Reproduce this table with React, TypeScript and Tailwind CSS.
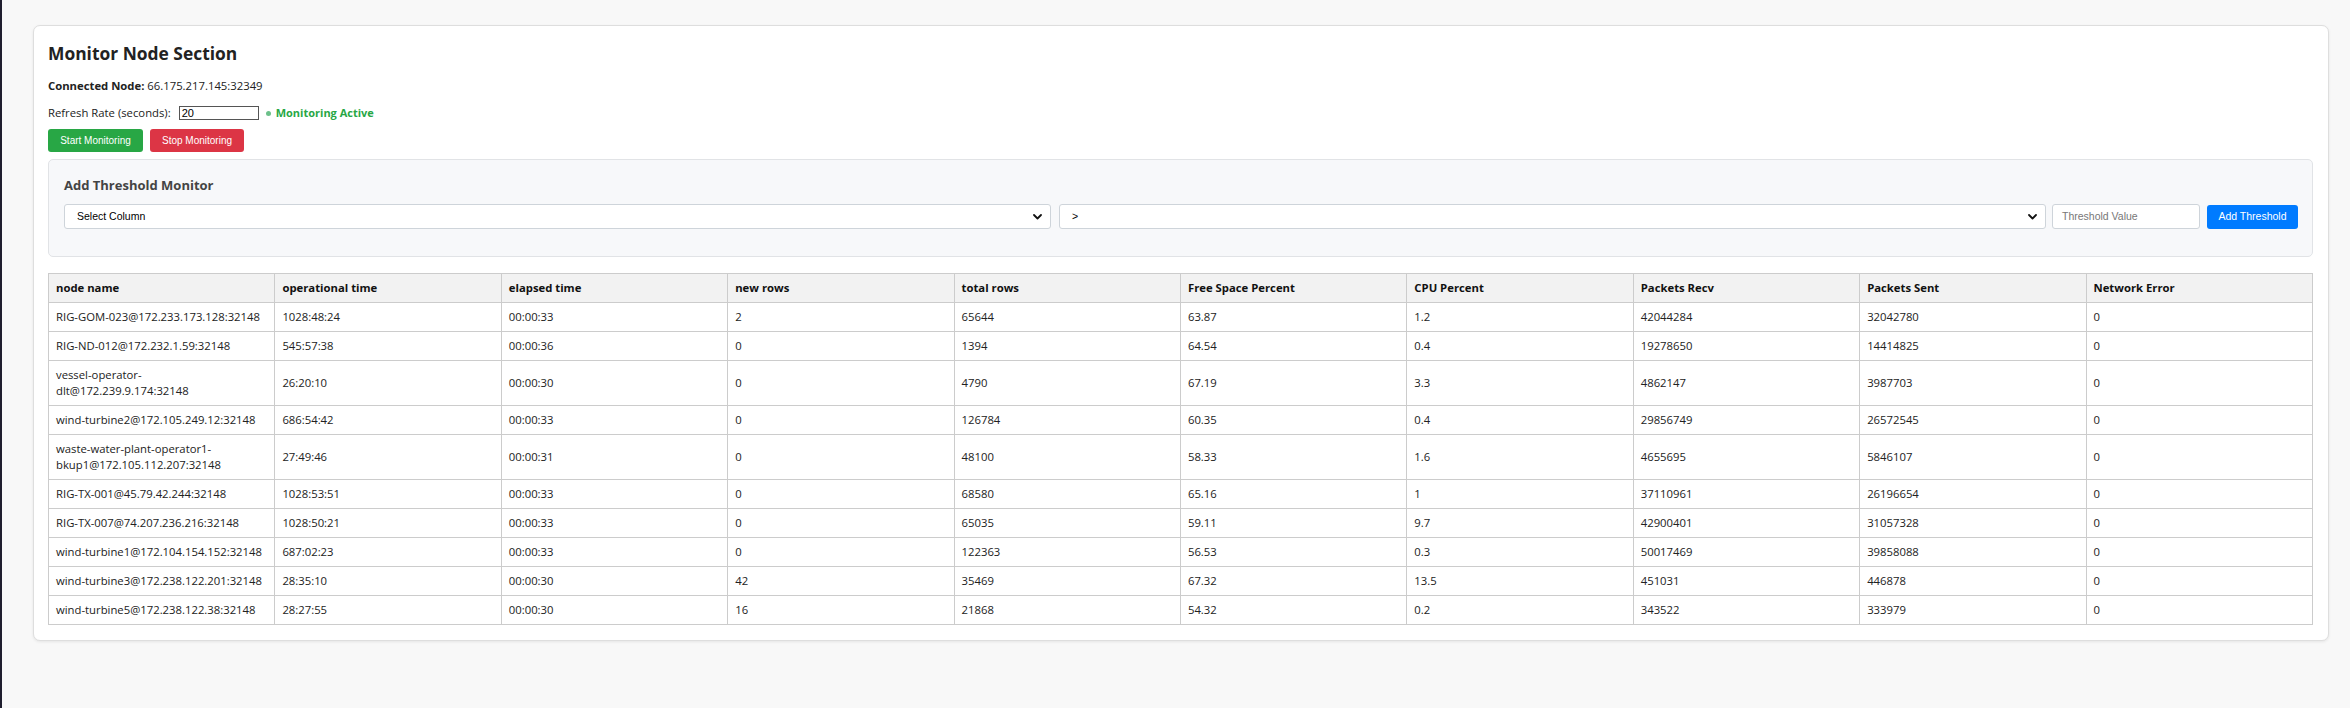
import React from "react";

const rows: string[][] = [
  ["RIG-GOM-023@172.233.173.128:32148", "1028:48:24", "00:00:33", "2", "65644", "63.87", "1.2", "42044284", "32042780", "0"],
  ["RIG-ND-012@172.232.1.59:32148", "545:57:38", "00:00:36", "0", "1394", "64.54", "0.4", "19278650", "14414825", "0"],
  ["vessel-operator-dlt@172.239.9.174:32148", "26:20:10", "00:00:30", "0", "4790", "67.19", "3.3", "4862147", "3987703", "0"],
  ["wind-turbine2@172.105.249.12:32148", "686:54:42", "00:00:33", "0", "126784", "60.35", "0.4", "29856749", "26572545", "0"],
  ["waste-water-plant-operator1-bkup1@172.105.112.207:32148", "27:49:46", "00:00:31", "0", "48100", "58.33", "1.6", "4655695", "5846107", "0"],
  ["RIG-TX-001@45.79.42.244:32148", "1028:53:51", "00:00:33", "0", "68580", "65.16", "1", "37110961", "26196654", "0"],
  ["RIG-TX-007@74.207.236.216:32148", "1028:50:21", "00:00:33", "0", "65035", "59.11", "9.7", "42900401", "31057328", "0"],
  ["wind-turbine1@172.104.154.152:32148", "687:02:23", "00:00:33", "0", "122363", "56.53", "0.3", "50017469", "39858088", "0"],
  ["wind-turbine3@172.238.122.201:32148", "28:35:10", "00:00:30", "42", "35469", "67.32", "13.5", "451031", "446878", "0"],
  ["wind-turbine5@172.238.122.38:32148", "28:27:55", "00:00:30", "16", "21868", "54.32", "0.2", "343522", "333979", "0"],
];

const headers = [
  "node name",
  "operational time",
  "elapsed time",
  "new rows",
  "total rows",
  "Free Space Percent",
  "CPU Percent",
  "Packets Recv",
  "Packets Sent",
  "Network Error",
];

function Chevron() {
  return (
    <svg width="9" height="6" viewBox="0 0 9 6" className="absolute right-[8px] top-1/2 -translate-y-1/2">
      <path d="M1 1 L4.5 4.5 L8 1" fill="none" stroke="#111" strokeWidth="1.8" strokeLinecap="round" strokeLinejoin="round" />
    </svg>
  );
}

function FakeSelect({ label }: { label: string }) {
  return (
    <div className="relative flex-1 h-[25px] bg-white border border-[#ced4da] rounded-[3px] flex items-center pl-[12px] text-[10.5px] text-black font-['Liberation_Sans',Arial,sans-serif]">
      {label}
      <Chevron />
    </div>
  );
}

export default function App() {
  return (
    <div className="flex w-full min-h-[708px] bg-[#f8f8f8] font-['Open_Sans',sans-serif] text-[#222]">
      <div className="w-[2px] bg-[#1f1e2e] shrink-0" />
      <div className="flex-1 pl-[31px] pr-[21px] pt-[25px]">
        <div className="bg-white border border-[#dedede] rounded-[7px] shadow-[0_1px_3px_rgba(0,0,0,0.08)] pl-[14px] pr-[15px] pt-[14px] pb-[15px]">
          <h2 className="text-[17.4px] leading-[26px] font-bold text-[#222]">Monitor Node Section</h2>
          <div className="mt-[12px] text-[11.3px] leading-[16px]">
            <span className="font-bold">Connected Node:</span> 66.175.217.145:32349
          </div>
          <div className="mt-[11px] flex items-center h-[16px] text-[11.3px]">
            <span>Refresh Rate (seconds):</span>
            <div className="ml-[8px] w-[80px] h-[14px] border border-[#555] bg-white flex items-center pl-[2px] text-[11px] text-black font-['Liberation_Sans',Arial,sans-serif]">
              20
            </div>
            <span className="ml-[7px] w-[5px] h-[5px] rounded-full bg-[#6cc08a]" />
            <span className="ml-[5px] font-bold text-[11px] text-[#28a745]">Monitoring Active</span>
          </div>
          <div className="mt-[8px] flex gap-[7px] font-['Liberation_Sans',Arial,sans-serif] text-[10px] text-white">
            <div className="w-[95px] h-[23px] rounded-[3px] bg-[#28a745] flex items-center justify-center">Start Monitoring</div>
            <div className="w-[94px] h-[23px] rounded-[3px] bg-[#dc3545] flex items-center justify-center">Stop Monitoring</div>
          </div>

          <div className="mt-[7px] bg-[#f7f8fa] border border-[#e1e3e6] rounded-[5px] pt-[16px] pb-[27px] pl-[15px] pr-[14px]">
            <h3 className="text-[13px] leading-[18px] font-bold text-[#444]">Add Threshold Monitor</h3>
            <div className="mt-[10px] flex items-center">
              <FakeSelect label="Select Column" />
              <div className="w-[8px]" />
              <FakeSelect label=">" />
              <div className="ml-[6px] w-[148px] h-[25px] bg-white border border-[#ced4da] rounded-[3px] flex items-center pl-[9px] text-[10.5px] text-[#777] font-['Liberation_Sans',Arial,sans-serif]">
                Threshold Value
              </div>
              <div className="ml-[7px] w-[91px] h-[24px] bg-[#007bff] rounded-[3px] flex items-center justify-center text-white text-[10.5px] font-['Liberation_Sans',Arial,sans-serif]">
                Add Threshold
              </div>
            </div>
          </div>

          <table className="mt-[16px] w-full table-fixed border-collapse text-[11.3px] leading-[16px]">
            <thead>
              <tr className="bg-[#f2f2f2]">
                {headers.map((h) => (
                  <th key={h} className="border border-[#cccccc] px-[7px] py-[6px] text-left font-bold text-[#111]">
                    {h}
                  </th>
                ))}
              </tr>
            </thead>
            <tbody>
              {rows.map((r, i) => (
                <tr key={i}>
                  {r.map((c, j) => (
                    <td key={j} className="border border-[#cccccc] px-[7px] py-[6px] text-left align-middle text-[#222]">
                      {c}
                    </td>
                  ))}
                </tr>
              ))}
            </tbody>
          </table>
        </div>
      </div>
    </div>
  );
}
